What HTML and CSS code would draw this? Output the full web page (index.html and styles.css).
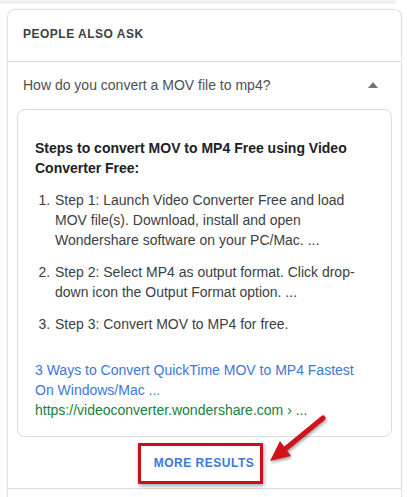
FILE: index.html
```html
<!doctype html>
<html lang="en">
<head>
  <meta charset="UTF-8" />
  <meta name="viewport" content="width=device-width, initial-scale=1.0" />
  <title>People also ask</title>
  <link rel="stylesheet" href="styles.css">
</head>
<body>
<div class="prev-card"></div>
<div class="paa-card">
  <div class="paa-header">PEOPLE ALSO ASK</div>
  <div class="question">
    <span>How do you convert a MOV file to mp4?</span>
    <svg class="caret" width="10" height="6" viewBox="0 0 10 6"><path d="M0 6 L5 0 L10 6 Z" fill="#757575"/></svg>
  </div>
  <div class="answer">
    <div class="answer-title">Steps to convert MOV to MP4 Free using Video Converter Free:</div>
    <ol class="steps">
      <li>Step 1: Launch Video Converter Free and load MOV file(s). Download, install and open Wondershare software on your PC/Mac. ...</li>
      <li>Step 2: Select MP4 as output format. Click drop-down icon the Output Format option. ...</li>
      <li>Step 3: Convert MOV to MP4 for free.</li>
    </ol>
    <a class="source-link" href="#">3 Ways to Convert QuickTime MOV to MP4 Fastest On Windows/Mac ...</a>
    <div class="source-url">https://videoconverter.wondershare.com › ...</div>
  </div>
  <div class="more-row">
    <a class="more-results" href="#">MORE RESULTS</a>
  </div>
  <div class="bottom-divider"></div>

  <!-- annotation arrow -->
  <svg class="pointer" width="70" height="60" viewBox="0 0 70 60">
    <line x1="61" y1="8" x2="22" y2="40" stroke="#d0121b" stroke-width="5" stroke-linecap="round"/>
    <polygon points="8,51 29,46 18,31" fill="#d0121b"/>
  </svg>
</div>
</body>
</html>
```

FILE: styles.css
```css
body {
  font-family: "Liberation Sans", Arial, sans-serif;
  background-color: #fff;
  margin: 0;
  padding: 0;
}
.prev-card {
  width: 396px;
  height: 2px;
  background-color: #f3f3f3;
  box-shadow: 0 1px 2px rgba(0, 0, 0, 0.12);
  border-radius: 0 0 8px 8px;
}
.paa-card {
  position: relative;
  margin: 7px 0 0 7px;
  width: 393px;
  height: 500px;
  border: 1px solid #e2e2e2;
  border-bottom: none;
  border-radius: 8px 8px 0 0;
  box-shadow: 0 0 3px rgba(0, 0, 0, 0.06);
}
.paa-header {
  padding: 14px 15px 17px;
  font-size: 12px;
  line-height: 20px;
  font-weight: bold;
  letter-spacing: 0.5px;
  color: #3c4043;
  border-bottom: 1px solid #dcdcdc;
}
.question {
  display: flex;
  justify-content: space-between;
  align-items: center;
  padding: 13px 23px 14px 15px;
  font-size: 14px;
  line-height: 20px;
  color: #4d5156;
}
.caret {
  margin-top: -1px;
}
.answer {
  margin: 0 9px;
  padding: 28px 17px 16px;
  border: 1px solid #dadce0;
  border-radius: 8px;
  font-size: 14px;
  line-height: 20px;
  color: #3c4043;
}
.answer-title {
  font-weight: bold;
  color: #202124;
}
.steps {
  margin: 12px 0 26px;
  padding-left: 19px;
}
.steps li {
  margin-bottom: 12px;
  padding-left: 1px;
}
.steps li:last-child {
  margin-bottom: 0;
}
.source-link {
  display: block;
  color: #3b78d8;
  text-decoration: none;
}
.source-url {
  color: #188038;
}
.more-row {
  display: flex;
  justify-content: center;
  padding: 6px 0 4px;
}
.more-results {
  display: block;
  margin-left: -8px;
  padding: 10px 6px 10px 13px;
  height: 15px;
  line-height: 15px;
  border: 3px solid #c8101d;
  box-shadow: 1px 2px 4px rgba(0, 0, 0, 0.35);
  font-size: 12px;
  font-weight: bold;
  letter-spacing: 0.5px;
  color: #3b78d8;
  text-decoration: none;
}
.bottom-divider {
  border-top: 1px solid #dcdcdc;
}
.pointer {
  position: absolute;
  left: 254px;
  top: 400px;
  filter: drop-shadow(1px 2px 1.5px rgba(0, 0, 0, 0.35));
}
```
